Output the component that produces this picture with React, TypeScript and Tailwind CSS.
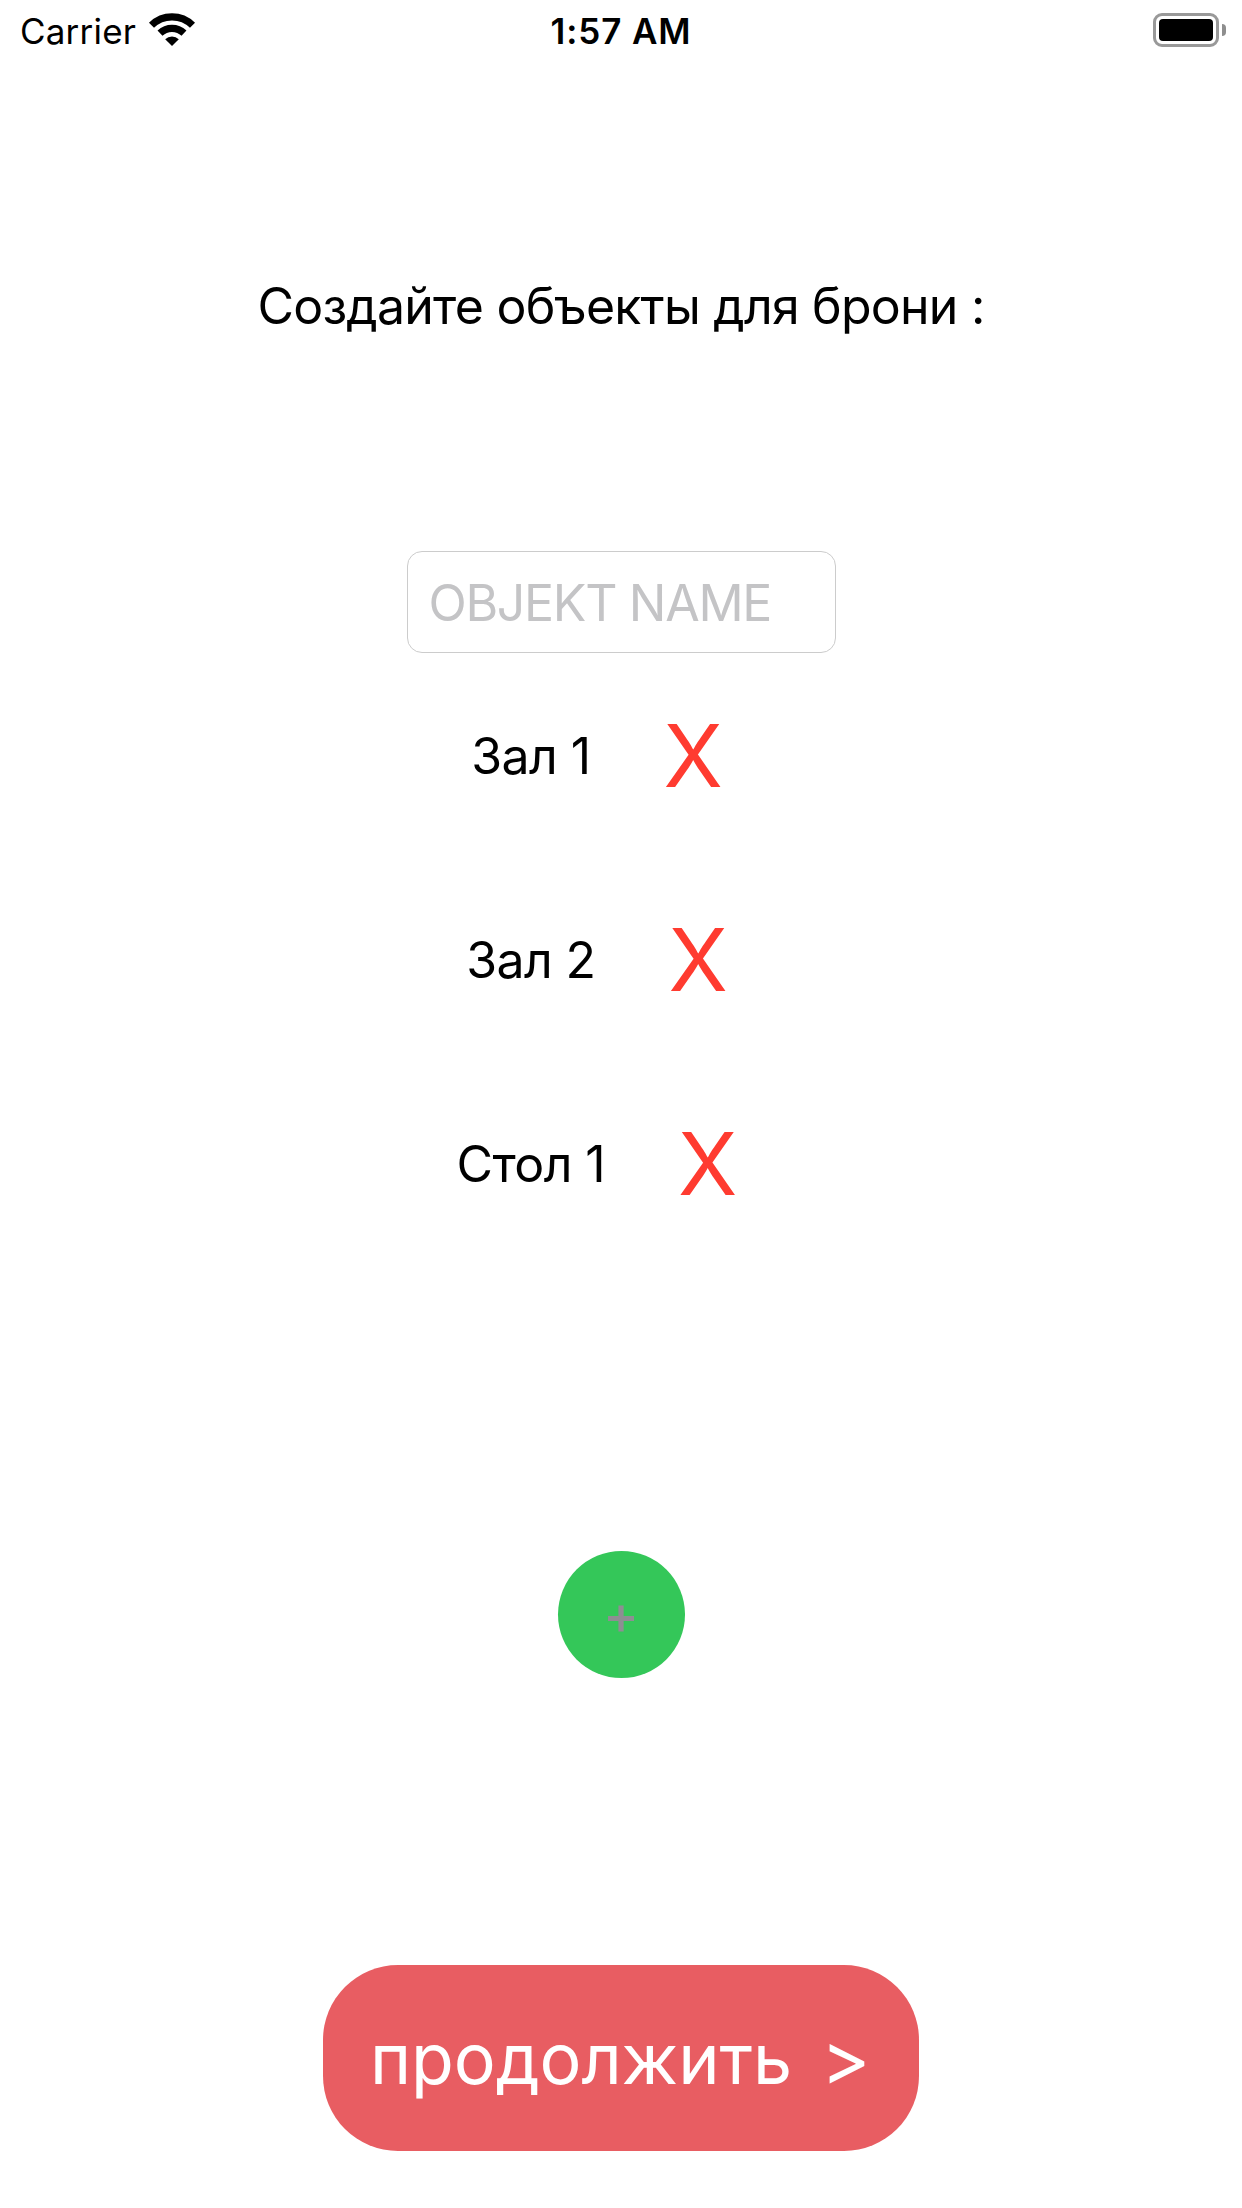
const objects = ['Зал 1', 'Зал 2', 'Стол 1'];

function WifiIcon() {
  return (
    <svg className="ml-[12px] h-[34px] w-[48px]" viewBox="148 13 48 34" fill="none">
      <path d="M151.5 25.2a29.3 29.3 0 0 1 41 0" stroke="#000" strokeWidth="7.2" />
      <path d="M160 33.2a17.5 17.5 0 0 1 24 0" stroke="#000" strokeWidth="7.2" />
      <path d="M165.2 39.2a9.8 9.8 0 0 1 13.6 0L172 46z" fill="#000" />
    </svg>
  );
}

function BatteryIcon() {
  return (
    <div className="flex items-center gap-[3px]">
      <div className="h-[34px] w-[66px] rounded-[9px] border-[3px] border-[#999] p-[3px]">
        <div className="h-full w-full rounded-[4px] bg-black" />
      </div>
      <div className="h-[12px] w-[4px] rounded-r-full bg-[#8e8e8e]" />
    </div>
  );
}

export default function App() {
  return (
    <div className="flex h-[2208px] w-[1242px] flex-col items-center overflow-hidden whitespace-nowrap bg-white font-[Inter,sans-serif] text-black">
      <header className="grid h-[60px] w-full grid-cols-[1fr_auto_1fr] items-center">
        <div className="flex h-[60px] items-center pl-[20px] text-[35px] leading-[58px] tracking-[0.2px]">
          <span className="pt-[2px]">Carrier</span>
          <WifiIcon />
        </div>
        <div className="pt-[2px] text-center text-[35px] font-[580] leading-[58px] tracking-[0.9px]">1:57 AM</div>
        <div className="flex justify-end pr-[16px]">
          <BatteryIcon />
        </div>
      </header>

      <h1 className="mt-[216px] text-[50px] leading-[60px] tracking-[-0.77px]">Создайте объекты для брони :</h1>

      <input
        className="mt-[215px] h-[102px] w-[429px] rounded-[15px] border border-[#ccc] px-[21px] pt-[2px] text-[50px] tracking-[-1.3px] placeholder:text-[#c4c4c6]"
        placeholder="OBJEKT NAME"
      />

      <ul className="flex flex-col pr-[49px]">
        {objects.map((name) => (
          <li key={name} className="flex h-[204px] items-center justify-center gap-[73px]">
            <span className="pt-[2px] text-[50px] leading-[60px] tracking-[-0.6px]">{name}</span>
            <button className="pt-px text-[87px] font-[420] leading-[100px] tracking-[-1px] text-[#ff3b30]">X</button>
          </li>
        ))}
      </ul>

      <button className="mt-[286px] flex h-[127px] w-[127px] items-center justify-center rounded-full bg-[#34c759] text-[54px] font-[450] leading-[60px] text-[#8e8e93]">
        +
      </button>

      <button className="mt-[287px] flex h-[186px] w-[596px] items-center rounded-[75px] bg-[#e85d62] pl-[47px] text-[70px] leading-[80px] text-white">
        <span className="pt-[2px] tracking-[-0.1px]">продолжить</span>
        <span className="ml-[29px] text-[75px]">&gt;</span>
      </button>
    </div>
  );
}
